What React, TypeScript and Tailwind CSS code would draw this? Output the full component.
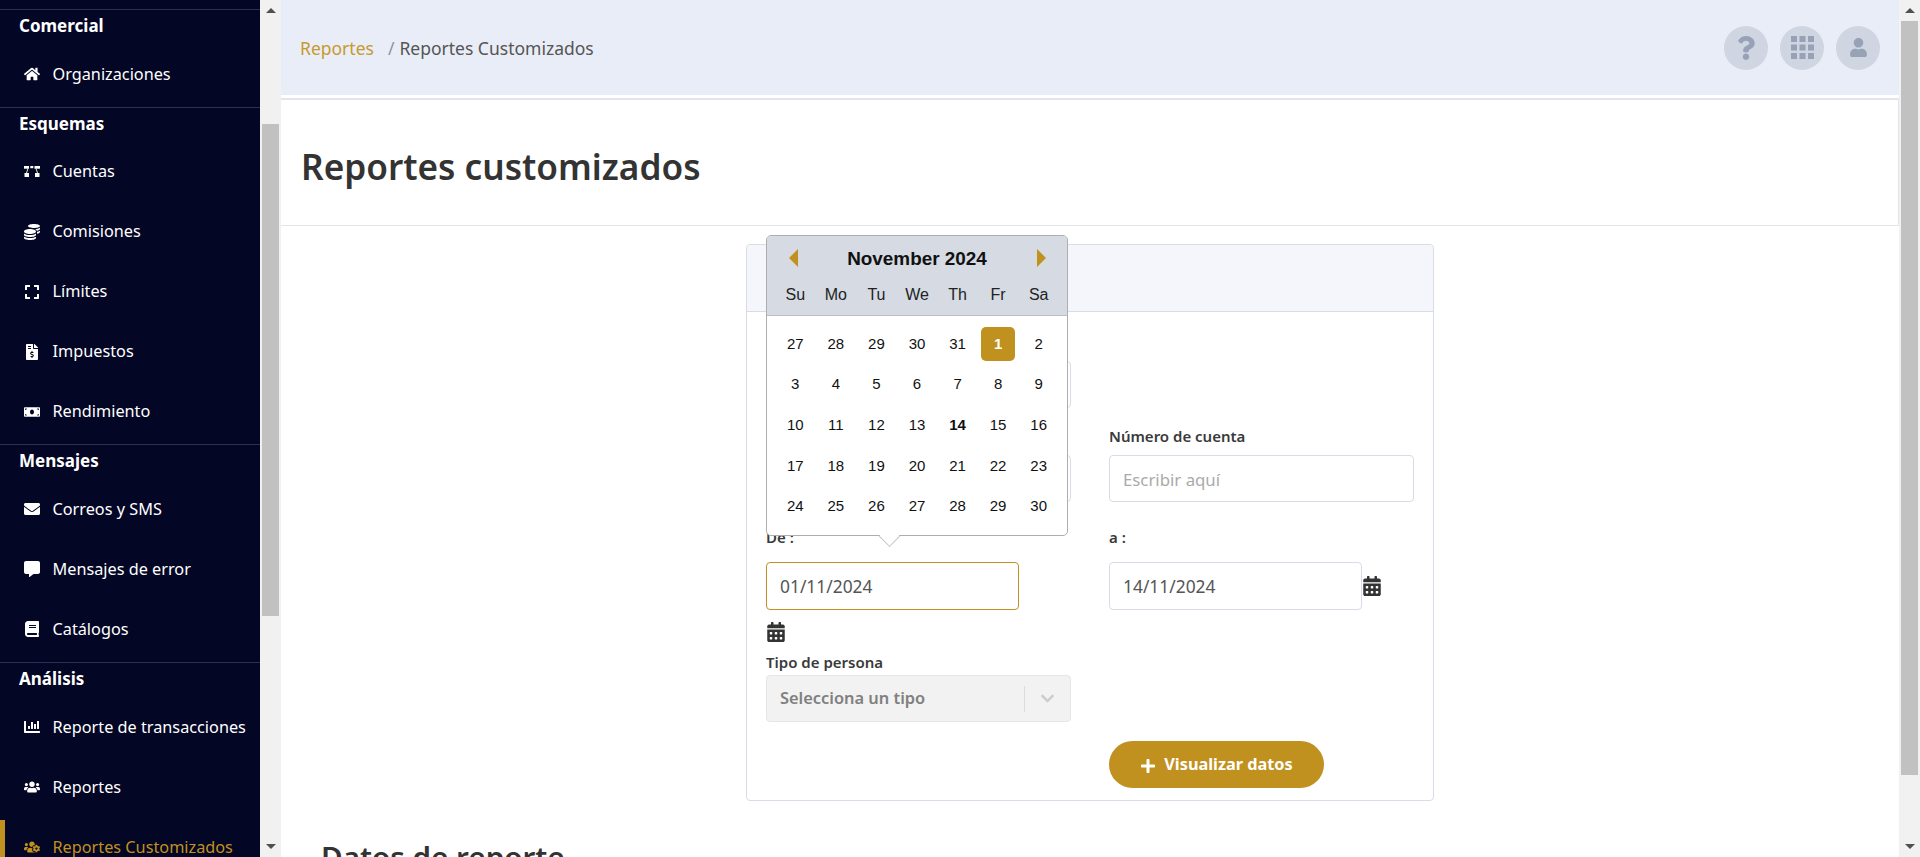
import type { ReactNode } from "react";
import {
  FaBook,
  FaCalendarAlt,
  FaChartBar,
  FaChevronDown,
  FaCoins,
  FaCommentAlt,
  FaEnvelope,
  FaExpand,
  FaFileInvoiceDollar,
  FaHome,
  FaMoneyBill,
  FaPlus,
  FaQuestion,
  FaUser,
  FaUsers,
  FaUsersCog,
} from "react-icons/fa";

const AccountsIcon = () => (
  <svg width="16" height="11" viewBox="0 0 16 11" fill="#fff">
    <rect x="0" y="0" width="5" height="2.7" />
    <rect x="6.3" y="0" width="3" height="2.2" />
    <rect x="10.5" y="0" width="5.5" height="2.7" />
    <rect x="0.5" y="7" width="4.5" height="4" />
    <rect x="11" y="7" width="4.5" height="4" />
    <path d="M4 2.5 L2.5 7 M12 2.5 L13.5 7" stroke="#fff" strokeWidth="0.9" />
  </svg>
);

const GridIcon = () => (
  <svg width="23" height="23" viewBox="0 0 23 23" fill="currentColor">
    {[0, 8.5, 17].flatMap((y) =>
      [0, 8.5, 17].map((x) => <rect key={`${x}-${y}`} x={x} y={y} width="6" height="6" />),
    )}
  </svg>
);

const menu = [
  { title: "Comercial", items: [{ label: "Organizaciones", icon: <FaHome /> }] },
  {
    title: "Esquemas",
    items: [
      { label: "Cuentas", icon: <AccountsIcon /> },
      { label: "Comisiones", icon: <FaCoins /> },
      { label: "Límites", icon: <FaExpand /> },
      { label: "Impuestos", icon: <FaFileInvoiceDollar /> },
      { label: "Rendimiento", icon: <FaMoneyBill /> },
    ],
  },
  {
    title: "Mensajes",
    items: [
      { label: "Correos y SMS", icon: <FaEnvelope /> },
      { label: "Mensajes de error", icon: <FaCommentAlt /> },
      { label: "Catálogos", icon: <FaBook /> },
    ],
  },
  {
    title: "Análisis",
    items: [
      { label: "Reporte de transacciones", icon: <FaChartBar /> },
      { label: "Reportes", icon: <FaUsers /> },
      { label: "Reportes Customizados", icon: <FaUsersCog />, active: true },
    ],
  },
];

const weekDays = ["Su", "Mo", "Tu", "We", "Th", "Fr", "Sa"];
const days = [
  27, 28, 29, 30, 31, 1, 2, 3, 4, 5, 6, 7, 8, 9, 10, 11, 12, 13, 14, 15, 16, 17, 18, 19, 20, 21, 22, 23, 24, 25,
  26, 27, 28, 29, 30,
];

const Sidebar = () => (
  <aside className="w-[260px] shrink-0 h-full overflow-hidden bg-[#030624] pt-[9px]">
    {menu.map((group) => (
      <section key={group.title} className="border-t border-[#2e3050] pb-[2.67px]">
        <h3 className="pl-[19px] pt-[3px] h-[34px] text-[17px] leading-[26px] font-bold text-white">{group.title}</h3>
        {group.items.map((item) => (
          <div
            key={item.label}
            className={`relative flex items-center h-[60px] pl-[24px] text-[16.25px] ${
              item.active ? "text-[#c1911f]" : "text-white"
            }`}
          >
            {item.active && <span className="absolute left-0 top-[3px] bottom-[-10px] w-[5px] bg-[#c1911f]" />}
            <span className="w-[16px] text-[16px] flex justify-center">{item.icon}</span>
            <span className="ml-[12.5px]">{item.label}</span>
          </div>
        ))}
      </section>
    ))}
  </aside>
);

const Scrollbar = ({ top, height }: { top: number; height: number }) => (
  <div className="w-[21px] shrink-0 h-full bg-[#f1f1f1] flex flex-col items-center">
    <div className="h-[21px] shrink-0 flex items-center justify-center">
      <span className="w-0 h-0 border-x-[5px] border-x-transparent border-b-[5px] border-b-[#505050]" />
    </div>
    <div className="w-[17px] shrink-0 bg-[#c1c1c1]" style={{ marginTop: top, height }} />
    <div className="mt-auto h-[21px] shrink-0 flex items-center justify-center">
      <span className="w-0 h-0 border-x-[5px] border-x-transparent border-t-[5px] border-t-[#505050]" />
    </div>
  </div>
);

const RoundIcon = ({ children }: { children: ReactNode }) => (
  <div className="w-[44px] h-[44px] rounded-full bg-[#cfd5e1] flex items-center justify-center text-[#97a2b6]">
    {children}
  </div>
);

const Label = ({ children, className }: { children?: ReactNode; className?: string }) => (
  <label className={`block h-[20px] text-[15px] leading-[19px] font-semibold text-[#3a3a3a] ${className ?? ""}`}>
    {children}
  </label>
);

const TextBox = ({
  value,
  placeholder,
  focused,
  tall,
}: {
  value?: string;
  placeholder?: string;
  focused?: boolean;
  tall?: boolean;
}) => (
  <input
    readOnly
    value={value}
    placeholder={placeholder}
    className={`block w-full ${tall ? "h-[48px]" : "h-[47px]"} rounded-[4px] border bg-white px-[13px] text-[17.4px] text-[#555] placeholder:text-[16.8px] placeholder:text-[#aaa] outline-none ${
      focused ? "border-[#c1911f]" : "border-[#d8dce6]"
    }`}
  />
);

const DatePopup = () => (
  <div className="absolute left-[19px] top-[-10px] z-10 w-[302px] h-[301px] rounded-[5px] border border-[#aeaeae] bg-white font-['Liberation_Sans',Arial,sans-serif] text-black">
    <div className="h-[80px] rounded-t-[4px] border-b border-[#b9bec8] bg-[#d5dae3] px-[8px]">
      <div className="relative h-[41px] pt-[10px] text-center text-[18.9px] leading-[26px] font-bold text-[#111]">
        November 2024
        <svg className="absolute left-[14px] top-[13px]" width="10" height="18" viewBox="0 0 10 18">
          <polygon points="9,0 9,18 0,9" fill="#c1911f" />
        </svg>
        <svg className="absolute right-[13px] top-[13px]" width="10" height="18" viewBox="0 0 10 18">
          <polygon points="1,0 1,18 10,9" fill="#c1911f" />
        </svg>
      </div>
      <div className="grid grid-cols-7 mt-[8px] text-center text-[16px] leading-[20px] text-[#222]">
        {weekDays.map((d) => (
          <span key={d}>{d}</span>
        ))}
      </div>
    </div>
    <div className="grid grid-cols-7 px-[8px] pt-[11px] text-[15px] text-[#111]">
      {days.map((d, i) => (
        <div key={i} className="h-[40.6px] flex items-start justify-center">
          <span
            className={`w-[34px] h-[34px] flex items-center justify-center rounded-[5px] ${
              i === 5 ? "bg-[#c1911f] text-white font-bold" : ""
            } ${i === 18 ? "font-bold" : ""}`}
          >
            {d}
          </span>
        </div>
      ))}
    </div>
    <span className="absolute left-[115px] bottom-[-8.5px] w-[15px] h-[15px] rotate-45 border-r border-b border-[#c4c4c4] bg-white" />
  </div>
);

const ReportCard = () => (
  <div className="relative mx-auto mt-[18px] w-[688px] rounded-[4px] border border-[#d8dce6] bg-white">
    <div className="h-[67px] rounded-t-[4px] border-b border-[#d8dce6] bg-[#f4f6fb]" />
    <DatePopup />
    <div className="grid grid-cols-[305px_305px] gap-x-[38px] px-[19px] pt-[21px] pb-[12px]">
      <div className="h-[74px]">
        <Label className="mb-[8px]" />
        <TextBox />
      </div>
      <div />
      <div className="mt-[20px] h-[75px]">
        <Label className="mb-[8px]" />
        <TextBox />
      </div>
      <div className="mt-[20px] h-[75px]">
        <Label className="mb-[8px]">Número de cuenta</Label>
        <TextBox placeholder="Escribir aquí" />
      </div>
      <div className="mt-[26px]">
        <Label className="mb-[14px]">De :</Label>
        <div className="w-[253px]">
          <TextBox value="01/11/2024" focused tall />
        </div>
        <FaCalendarAlt className="mt-[12px] text-[20px] text-[#333]" />
      </div>
      <div className="mt-[26px]">
        <Label className="mb-[14px]">a :</Label>
        <div className="flex items-center">
          <div className="w-[253px]">
            <TextBox value="14/11/2024" tall />
          </div>
          <FaCalendarAlt className="text-[20px] text-[#333]" />
        </div>
      </div>
      <div className="mt-[11px]">
        <Label className="mb-[2px]">Tipo de persona</Label>
        <div className="flex items-center h-[47px] rounded-[4px] border border-[#e6e6e6] bg-[#f2f2f2] pl-[13px]">
          <span className="flex-1 text-[16.4px] font-semibold text-[#808080]">Selecciona un tipo</span>
          <span className="w-px h-[26px] bg-[#dcdcdc]" />
          <FaChevronDown className="mx-[15px] text-[15px] text-[#cccccc]" />
        </div>
      </div>
      <div />
      <div />
      <button className="mt-[19px] flex items-center justify-center w-[215px] h-[47px] rounded-full bg-[#c1911f] text-[16.3px] font-bold text-white">
        <FaPlus className="mr-[8px] mt-[2px] text-[16px]" />
        Visualizar datos
      </button>
    </div>
  </div>
);

export default function App() {
  return (
    <div className="flex w-[1920px] h-[857px] overflow-hidden bg-white font-['Noto_Sans',sans-serif]">
      <Sidebar />
      <Scrollbar top={103} height={492} />
      <main className="flex-1 min-w-0 h-full overflow-hidden">
        <header className="flex items-center justify-between h-[95px] bg-[#e9edf7] pl-[19px] pr-[19px]">
          <nav className="mt-[2px] text-[17.5px]">
            <span className="text-[#c79a2e]">Reportes</span>
            <span className="ml-[14px] text-[#8a94a6]">/</span>
            <span className="ml-[5px] text-[#555]">Reportes Customizados</span>
          </nav>
          <div className="flex gap-[12px]">
            <RoundIcon>
              <FaQuestion className="text-[24px]" />
            </RoundIcon>
            <RoundIcon>
              <GridIcon />
            </RoundIcon>
            <RoundIcon>
              <FaUser className="text-[19px]" />
            </RoundIcon>
          </div>
        </header>
        <div className="mt-[3px] flex items-center h-[128px] border-t-2 border-t-[#e3e5ec] border-b border-b-[#e3e5ec] border-r border-r-[#e3e5ec] pl-[20px] pt-[7px]">
          <h1 className="text-[35.2px] font-semibold text-[#333]">Reportes customizados</h1>
        </div>
        <ReportCard />
        <h2 className="mt-[34px] ml-[40px] text-[29.6px] font-semibold text-[#333]">Datos de reporte</h2>
      </main>
      <Scrollbar top={0} height={754} />
    </div>
  );
}
